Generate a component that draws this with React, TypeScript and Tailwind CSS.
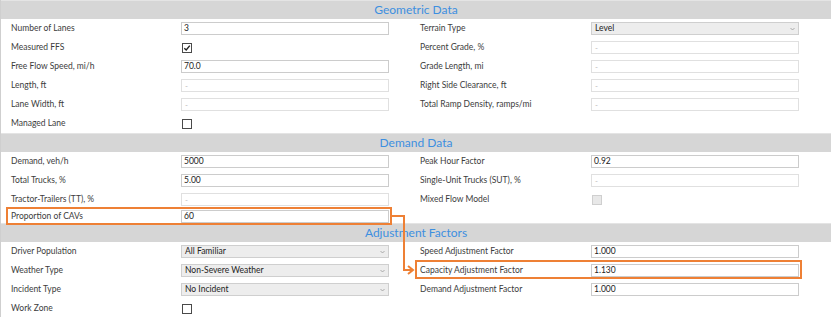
type Field =
  | { kind: "text"; value: string }
  | { kind: "off" }
  | { kind: "select"; value: string }
  | { kind: "check"; checked?: boolean; disabled?: boolean }
  | { kind: "none" };

type Row = { label: string; field: Field; hl?: boolean; h?: string };

const Control = ({ field }: { field: Field }) => {
  if (field.kind === "text")
    return (
      <div className="w-[208px] h-[13px] border border-[#cccccc] bg-white flex items-center pl-[2px] text-[8.5px] text-[#222]">
        {field.value}
      </div>
    );
  if (field.kind === "off")
    return (
      <div className="w-[208px] h-[13px] border border-[#e0e0e0] bg-white flex items-center pl-[3px] text-[8px] text-[#b8b8b8]">
        -
      </div>
    );
  if (field.kind === "select")
    return (
      <div className="w-[208px] h-[13px] border border-[#cfcfcf] bg-[#ededed] flex items-center justify-between pl-[3px] pr-[3px] text-[8.5px] text-[#222]">
        <span>{field.value}</span>
        <svg width="5" height="4" viewBox="0 0 5 4">
          <path d="M0.5 1 L2.5 3 L4.5 1" stroke="#999" strokeWidth="0.8" fill="none" />
        </svg>
      </div>
    );
  if (field.kind === "check")
    return (
      <div
        className={
          field.disabled
            ? "ml-[1px] w-[10px] h-[10px] border border-[#cfcfcf] bg-[#e8e8e8]"
            : "ml-[1px] w-[10px] h-[10px] border border-[#4a4a4a] bg-white flex items-center justify-center"
        }
      >
        {field.checked && (
          <svg width="8" height="8" viewBox="0 0 8 8">
            <path d="M1.3 4.2 L3.2 6 L6.8 1.6" stroke="#222" strokeWidth="1.4" fill="none" />
          </svg>
        )}
      </div>
    );
  return null;
};

const Cell = ({ row, left }: { row: Row; left: boolean }) => (
  <div className={`relative flex items-center ${row.h ?? "h-[19px]"}`}>
    {row.hl && (
      <div
        className={
          left
            ? "absolute left-[5px] w-[386px] top-[-2px] h-[18px] border-2 border-[#ee8035]"
            : "absolute left-[4px] w-[387px] top-[-1px] h-[19px] border-2 border-[#ee8035]"
        }
      />
    )}
    <div className={`${left ? "pl-[10px]" : "pl-[9px]"} w-[180px] text-[8.5px] text-[#3c3c3c]`}>{row.label}</div>
    <Control field={row.field} />
  </div>
);

const Section = ({ title, left, right }: { title: string; left: Row[]; right: Row[] }) => (
  <div>
    <div className="h-[19px] bg-[#d6d6d6] border-t border-[#e4e4e4] flex items-center justify-center text-[12px] text-[#3d8fe0]">
      {title}
    </div>
    <div className="grid grid-cols-[410px_421px]">
      <div className="flex flex-col">
        {left.map((r, i) => (
          <Cell key={i} row={r} left />
        ))}
      </div>
      <div className="flex flex-col">
        {right.map((r, i) => (
          <Cell key={i} row={r} left={false} />
        ))}
      </div>
    </div>
  </div>
);

const none: Field = { kind: "none" };

export default function App() {
  return (
    <div
      className="relative w-[831px] h-[317px] overflow-hidden bg-white border-l border-[#cfcfcf]"
      style={{ fontFamily: "Lato, 'Open Sans', sans-serif" }}
    >
      <Section
        title="Geometric Data"
        left={[
          { label: "Number of Lanes", field: { kind: "text", value: "3" } },
          { label: "Measured FFS", field: { kind: "check", checked: true } },
          { label: "Free Flow Speed, mi/h", field: { kind: "text", value: "70.0" } },
          { label: "Length, ft", field: { kind: "off" } },
          { label: "Lane Width, ft", field: { kind: "off" } },
          { label: "Managed Lane", field: { kind: "check" } },
        ]}
        right={[
          { label: "Terrain Type", field: { kind: "select", value: "Level" } },
          { label: "Percent Grade, %", field: { kind: "off" } },
          { label: "Grade Length, mi", field: { kind: "off" } },
          { label: "Right Side Clearance, ft", field: { kind: "off" } },
          { label: "Total Ramp Density, ramps/mi", field: { kind: "off" } },
          { label: "", field: none },
        ]}
      />
      <Section
        title="Demand Data"
        left={[
          { label: "Demand, veh/h", field: { kind: "text", value: "5000" } },
          { label: "Total Trucks, %", field: { kind: "text", value: "5.00" } },
          { label: "Tractor-Trailers (TT), %", field: { kind: "off" } },
          { label: "Proportion of CAVs", field: { kind: "text", value: "60" }, hl: true, h: "h-[14px]" },
        ]}
        right={[
          { label: "Peak Hour Factor", field: { kind: "text", value: "0.92" } },
          { label: "Single-Unit Trucks (SUT), %", field: { kind: "off" } },
          { label: "Mixed Flow Model", field: { kind: "check", disabled: true } },
          { label: "", field: none, h: "h-[14px]" },
        ]}
      />
      <Section
        title="Adjustment Factors"
        left={[
          { label: "Driver Population", field: { kind: "select", value: "All Familiar" } },
          { label: "Weather Type", field: { kind: "select", value: "Non-Severe Weather" } },
          { label: "Incident Type", field: { kind: "select", value: "No Incident" } },
          { label: "Work Zone", field: { kind: "check" } },
        ]}
        right={[
          { label: "Speed Adjustment Factor", field: { kind: "text", value: "1.000" } },
          { label: "Capacity Adjustment Factor", field: { kind: "text", value: "1.130" }, hl: true },
          { label: "Demand Adjustment Factor", field: { kind: "text", value: "1.000" } },
          { label: "", field: none },
        ]}
      />
      {/* arrow from CAVs box to capacity factor box */}
      <svg className="absolute left-0 top-0 pointer-events-none" width="831" height="317">
        <path d="M391 216 H403 V270 H411" stroke="#ee8035" strokeWidth="2" fill="none" />
        <path d="M407 266 L412 270 L407 274" stroke="#ee8035" strokeWidth="2" fill="none" />
      </svg>
    </div>
  );
}
